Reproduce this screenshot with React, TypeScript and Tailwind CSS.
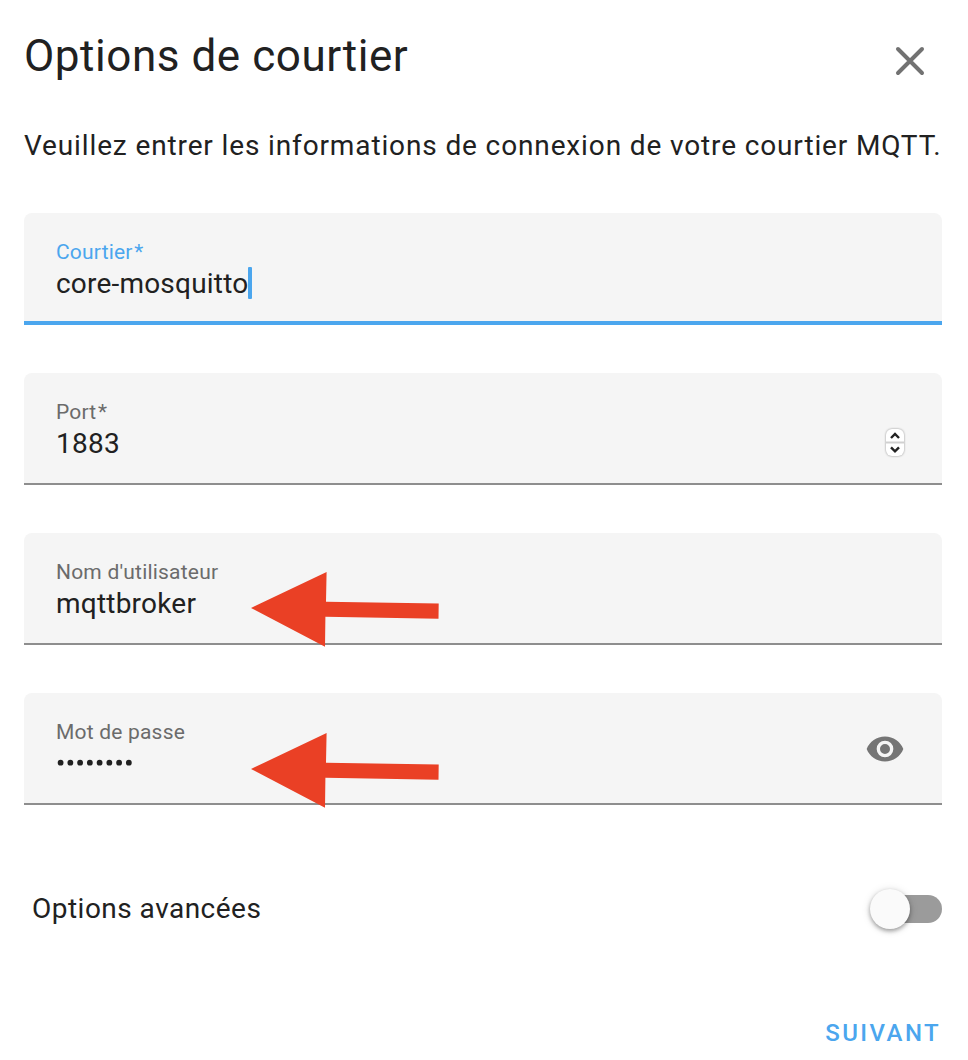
import React from "react";

function Arrow({ className }: { className: string }) {
  return (
    <svg className={`absolute ${className}`} width="190" height="76" viewBox="0 0 190 76">
      <path d="M1 36 76.600 0 76 29.800 188.700 31.500 188.500 46.700 75.400 44.700 75 74.700Z" fill="#ea4025" />
    </svg>
  );
}

function Field({ label, required, active, children }: { label: string; required?: boolean; active?: boolean; children: React.ReactNode }) {
  return (
    <div className={`relative h-28 rounded-t-lg bg-[#f5f5f5] pl-8 pt-[25px] ${active ? "border-b-4 border-[#4ba6ee]" : "border-b-2 border-[#8e8e8e]"}`}>
      <div className={`h-7 whitespace-nowrap text-[21px] leading-7 tracking-[0.2px] ${active ? "text-[#4ba6ee]" : "text-[#6b6b6b]"}`}>
        {label}
        {required && <span className="ml-[1.5px]">*</span>}
      </div>
      {children}
    </div>
  );
}

export default function App() {
  return (
    <main className="h-[1060px] w-[968px] overflow-hidden bg-white pl-6 pr-[26px] pt-7 font-['Roboto',sans-serif] text-[#212121]">
      <header className="flex h-14 justify-between">
        <h1 className="whitespace-nowrap text-[44px] leading-[56px] tracking-[0.55px]">Options de courtier</h1>
        <svg className="mr-2 mt-[9px]" width="48" height="48" viewBox="0 0 24 24">
          <path d="m6 6 12 12M18 6 6 18" stroke="#727272" strokeWidth="2" strokeLinecap="round" />
        </svg>
      </header>
      <p className="mt-[42px] h-10 whitespace-nowrap text-[28px] leading-10 tracking-[0.87px]">Veuillez entrer les informations de connexion de votre courtier MQTT.</p>
      <div className="mt-[47px] flex flex-col gap-12">
        <Field label="Courtier" required active>
          <div className="flex h-9 items-center text-[28px] leading-9 tracking-[0.2px]">
            core-mosquitto
            <span className="-mt-0.5 ml-[-0.5px] h-8 w-1 rounded-[1px] bg-[#4ba6ee]" />
          </div>
        </Field>
        <Field label="Port" required>
          <div className="text-[28px] leading-9 tracking-[0.3px]">1883</div>
          <svg className="absolute right-9 top-[54px] drop-shadow-[0_0_1px_rgba(0,0,0,0.4)]" width="22" height="32" viewBox="0 0 22 32">
            <rect x="2" y="2" width="18" height="27" rx="6" fill="white" />
            <path d="M2 15.500H20" stroke="#d0d0d0" strokeWidth="2" />
            <path d="m7 11 4-4 4 4M7 20.300l4 4 4-4" fill="none" stroke="#222" strokeWidth="2.400" />
          </svg>
        </Field>
        <Field label="Nom d'utilisateur">
          <div className="text-[28px] leading-9 tracking-[0.22px]">mqttbroker</div>
          <Arrow className="left-[226px] top-[39px]" />
        </Field>
        <Field label="Mot de passe">
          <svg width="80" height="34" viewBox="0 0 80 34">
            {[0, 1, 2, 3, 4, 5, 6, 7].map((i) => <circle key={i} cx={4.600 + i * 9.750} cy="16.700" r="2.900" fill="#212121" />)}
          </svg>
          <Arrow className="left-[226px] top-10" />
          <svg className="absolute right-[37px] top-9" width="40" height="40" viewBox="0 0 24 24">
            <path fill="#757575" d="M12 9a3 3 0 1 0 0 6 3 3 0 0 0 0-6m0 8a5 5 0 1 1 0-10 5 5 0 0 1 0 10m0-12.500C7 4.500 2.730 7.610 1 12c1.730 4.390 6 7.500 11 7.500s9.270-3.110 11-7.500C21.270 7.610 17 4.500 12 4.500" />
          </svg>
        </Field>
      </div>
      <div className="mt-[84px] flex h-10 items-center justify-between pl-2">
        <span className="text-[28px] leading-10 tracking-[0.48px]">Options avancées</span>
        <div className="flex h-7 w-16 items-center rounded-full bg-[#9b9b9b]">
          <span className="-ml-2 h-10 w-10 shrink-0 rounded-full bg-[#fafafa] shadow-[0_2px_4px_rgba(0,0,0,0.35),0_1px_10px_rgba(0,0,0,0.12)]" />
        </div>
      </div>
      <div className="mt-[84px] pr-px text-right text-[24px] font-medium leading-10 tracking-[2.400px] text-[#4ba6ee]">SUIVANT</div>
    </main>
  );
}
